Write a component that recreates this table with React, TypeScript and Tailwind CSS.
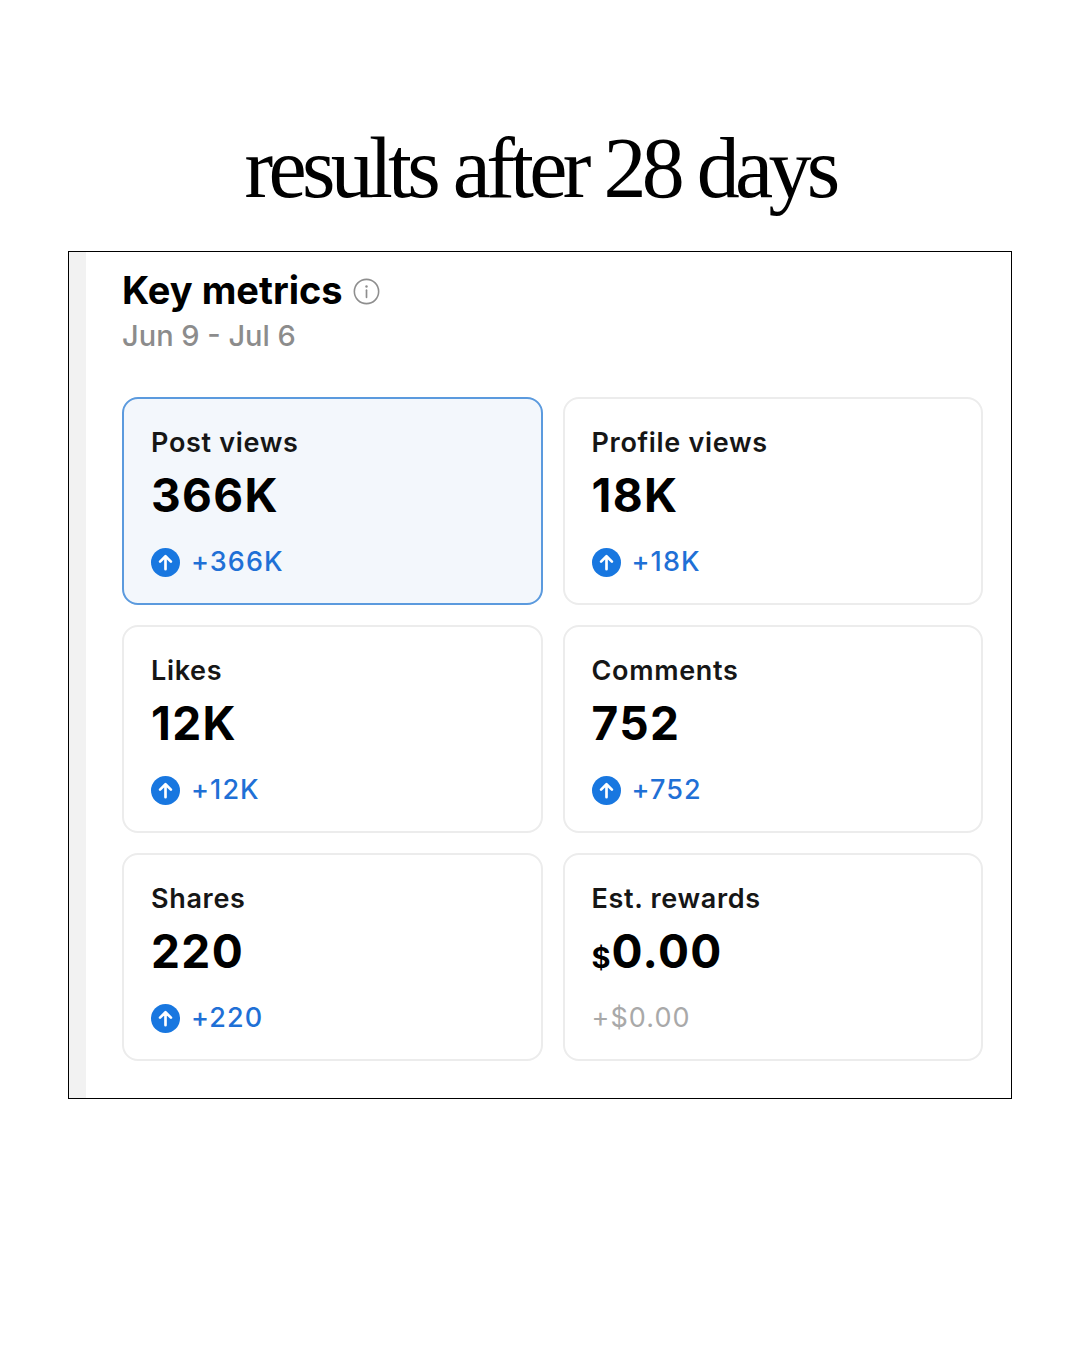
import React from "react";

type Metric = {
  label: string;
  value: string;
  delta: string;
  active?: boolean;
  money?: boolean;
};

const metrics: Metric[] = [
  { label: "Post views", value: "366K", delta: "+366K", active: true },
  { label: "Profile views", value: "18K", delta: "+18K" },
  { label: "Likes", value: "12K", delta: "+12K" },
  { label: "Comments", value: "752", delta: "+752" },
  { label: "Shares", value: "220", delta: "+220" },
  { label: "Est. rewards", value: "0.00", delta: "+$0.00", money: true },
];

function UpIcon() {
  return (
    <svg width="29" height="29" viewBox="0 0 24 24" className="shrink-0">
      <circle cx="12" cy="12" r="12" fill="#1877e0" />
      <path d="M12 17.5V7M7.5 11.3L12 6.8l4.5 4.5" stroke="#fff" strokeWidth="2.2" fill="none" strokeLinecap="round" strokeLinejoin="round" />
    </svg>
  );
}

function InfoIcon() {
  return (
    <svg width="27" height="27" viewBox="0 0 24 24" className="ml-[10px] mt-[2px]">
      <circle cx="12" cy="12" r="10.8" stroke="#8e8e8e" strokeWidth="1.4" fill="none" />
      <circle cx="12" cy="7.6" r="1.1" fill="#8e8e8e" />
      <path d="M12 10.8v6.4" stroke="#8e8e8e" strokeWidth="1.5" strokeLinecap="round" />
    </svg>
  );
}

function MetricCard({ m }: { m: Metric }) {
  return (
    <div
      className={`h-[208px] rounded-[16px] border-2 pl-[27px] pt-[28px] ${
        m.active ? "border-[#5b9ade] bg-[#f3f7fc]" : "border-[#ececec] bg-white"
      }`}
    >
      <div className="text-[27px] leading-[32px] font-semibold tracking-[0.025em] text-[#161616]">{m.label}</div>
      <div className="mt-[10px] h-[52px] flex items-baseline text-[46px] leading-[52px] font-bold tracking-[0.03em] text-black">
        {m.money && <span className="text-[29px] mr-[1px] tracking-normal">$</span>}
        {m.value}
      </div>
      <div className="mt-[25px] h-[32px] flex items-center gap-[11px] text-[27px] leading-[32px] tracking-[0.04em]">
        {m.money ? (
          <span className="text-[#a9a9a9]">{m.delta}</span>
        ) : (
          <>
            <UpIcon />
            <span className="text-[#1f70d6] font-medium">{m.delta}</span>
          </>
        )}
      </div>
    </div>
  );
}

export default function App() {
  return (
    <div className="w-[1080px] h-[1350px] bg-white">
      {/* Title */}
      <h1 className="pt-[125px] text-center text-[86px] leading-none tracking-[-0.055em] text-black font-['Liberation_Serif',serif]">
        results after 28 days
      </h1>

      {/* Screenshot frame */}
      <div className="mt-[40px] ml-[68px] w-[944px] h-[848px] border border-black flex font-['Inter',sans-serif]">
        <div className="w-[17px] bg-[#f2f2f2]" />
        <div className="flex-1 pl-[36px] pr-[28px] pt-[15px]">
          <div className="flex items-center">
            <h2 className="text-[38px] leading-[46px] font-bold text-black">Key metrics</h2>
            <InfoIcon />
          </div>
          <p className="mt-[5px] text-[29px] leading-[36px] font-medium text-[#8c8c8c]">Jun 9 - Jul 6</p>

          <div className="mt-[43px] grid grid-cols-2 gap-x-[20px] gap-y-[20px]">
            {metrics.map((m) => (
              <MetricCard key={m.label} m={m} />
            ))}
          </div>
        </div>
      </div>
    </div>
  );
}
